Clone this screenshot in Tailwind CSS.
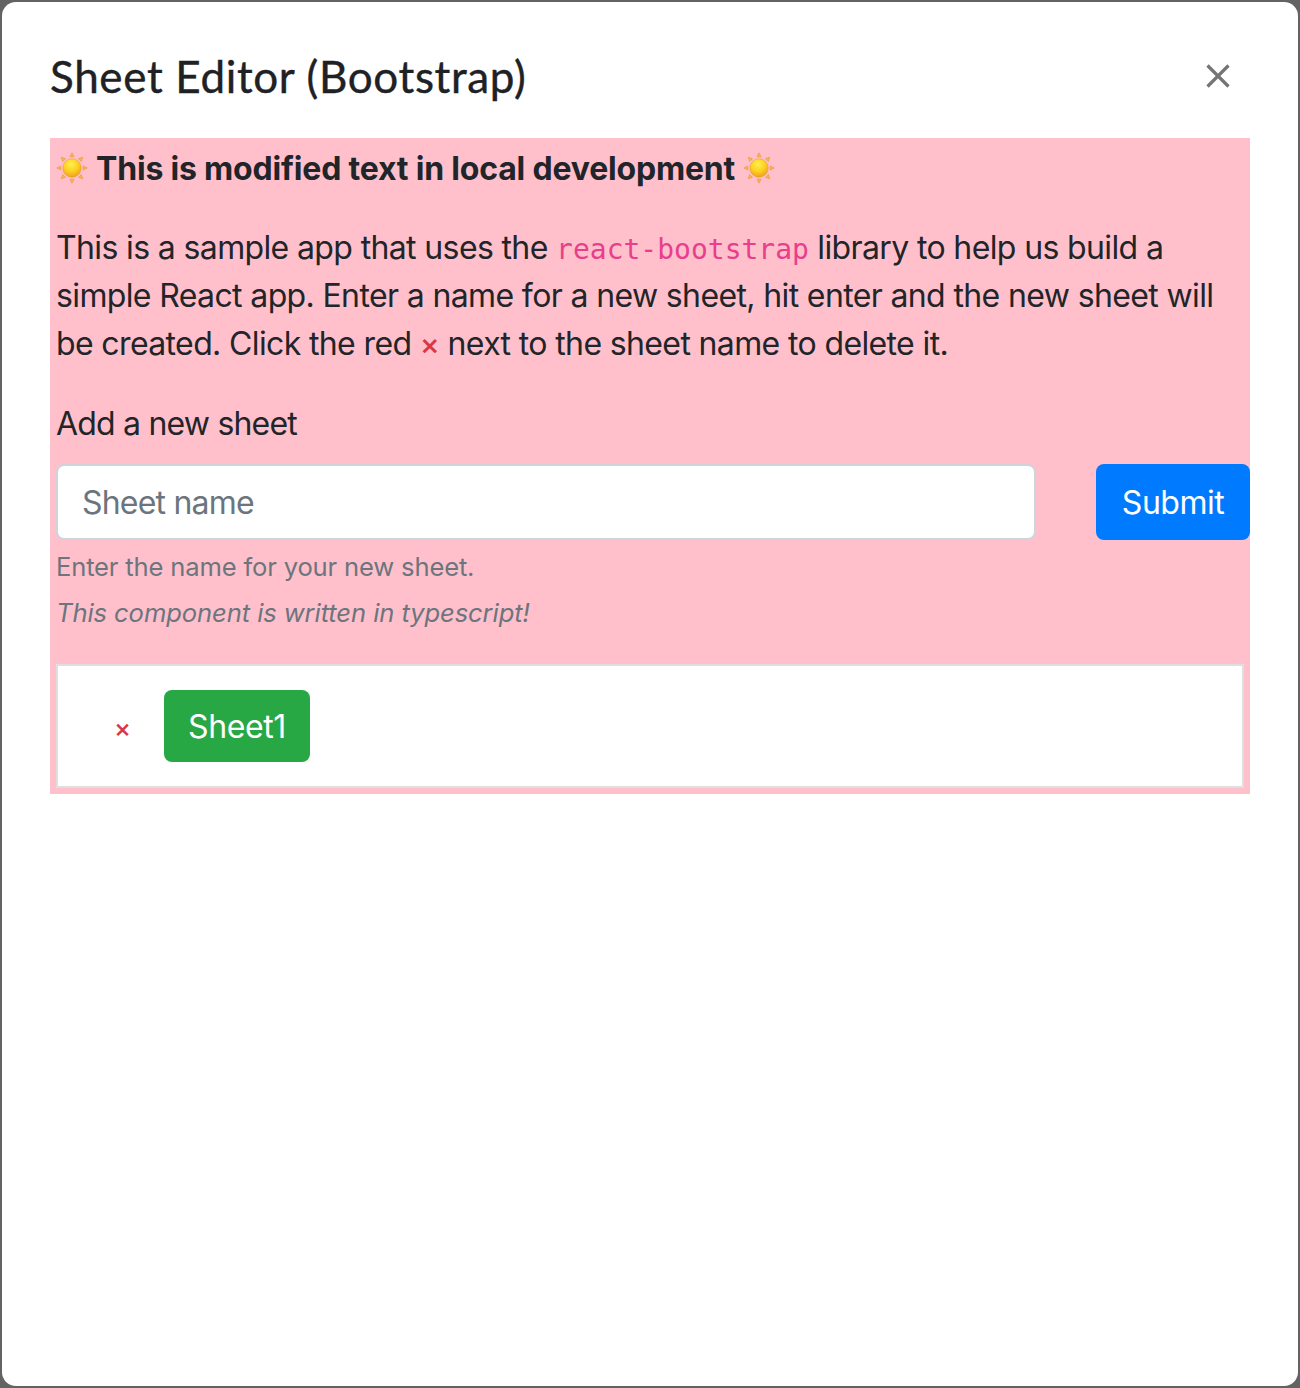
<!DOCTYPE html>
<html lang="en">
<head>
<meta charset="utf-8">
<title>Sheet Editor (Bootstrap)</title>
<script src="https://cdn.jsdelivr.net/npm/@tailwindcss/browser@4"></script>
</head>
<body class="bg-[#636363] font-['Inter',sans-serif] text-[32px] leading-[48px] text-[#212529]">
<svg class="absolute size-0">
  <defs>
    <radialGradient id="disc" cx="45%" cy="30%" r="70%">
      <stop offset="0" stop-color="#fff04a"/><stop offset=".55" stop-color="#fdd023"/><stop offset="1" stop-color="#f0a01c"/>
    </radialGradient>
    <symbol id="sun" viewBox="-16 -16 32 32">
      <g fill="#fbb92f" stroke="#e59a58" stroke-width=".7">
        <path id="ray" d="M-2-11.2 0-15.2 2-11.2Z"/>
        <use href="#ray" transform="rotate(45)"/><use href="#ray" transform="rotate(90)"/><use href="#ray" transform="rotate(135)"/>
        <use href="#ray" transform="rotate(180)"/><use href="#ray" transform="rotate(225)"/><use href="#ray" transform="rotate(270)"/><use href="#ray" transform="rotate(315)"/>
      </g>
      <circle r="9.2" fill="url(#disc)" stroke="#e8a030" stroke-width=".6"/>
    </symbol>
  </defs>
</svg>
<div class="h-[1388px] w-[1300px] p-[2px]">
  <main class="h-full rounded-[14px] bg-white px-12 pt-[46px]">
    <header class="flex h-[90px] items-start justify-between pr-5">
      <h1 class="font-['Lato',sans-serif] text-[44px] leading-[56px] tracking-[0.65px] whitespace-nowrap text-[#202124] [-webkit-text-stroke:0.4px]">Sheet Editor (Bootstrap)</h1>
      <button class="mt-4 block" aria-label="Close">
        <svg class="size-6" viewBox="0 0 24 24" fill="none" stroke="#757575" stroke-width="3.2"><path d="M1.5 1.5l21 21M22.5 1.5l-21 21"/></svg>
      </button>
    </header>
    <section class="h-[656px] bg-[#ffc0cb] pt-[6px] pl-[6px]">
      <p class="mb-8 flex items-center gap-2 font-bold tracking-[-0.19px] whitespace-nowrap"><svg class="size-8"><use href="#sun"/></svg><span class="relative top-px">This is modified text in local development</span><svg class="size-8"><use href="#sun"/></svg></p>
      <p class="mb-8 tracking-[-0.63px] whitespace-nowrap">
        <span class="block h-12">This is a sample app that uses the <code class="font-['DejaVu_Sans_Mono',monospace] text-[28px] leading-none tracking-normal text-[#e83e8c]">react-bootstrap</code> library to help us build a</span>
        <span class="block h-12">simple React app. Enter a name for a new sheet, hit enter and the new sheet will</span>
        <span class="block h-12">be created. Click the red <span class="text-[30px] leading-none font-medium text-[#dc3545]">×</span> next to the sheet name to delete it.</span>
      </p>
      <form>
        <label class="mb-4 block tracking-[-0.8px]">Add a new sheet</label>
        <div class="flex justify-between">
          <input class="h-[76px] w-[980px] rounded-lg border-2 border-[#ced4da] bg-white px-6 tracking-[-0.8px] placeholder:text-[#6c757d]" placeholder="Sheet name">
          <button type="button" class="h-[76px] w-[154px] rounded-lg bg-[#007bff] pt-px tracking-[-0.5px] text-white">Submit</button>
        </div>
        <small class="mt-2 block text-[25.6px] leading-[38px] tracking-[-0.17px] text-[#6c757d]">Enter the name for your new sheet.</small>
        <small class="mt-2 mb-8 block text-[25.6px] leading-[38px] tracking-[-0.1px] text-[#6c757d] italic">This component is written in typescript!</small>
      </form>
      <div class="mr-[6px] flex h-[124px] items-center border-2 border-[#dfdfdf] bg-white pl-[56px]">
        <span class="w-[50px] pt-1 text-[25.6px] font-medium text-[#dc3545]">×</span>
        <span class="flex h-[72px] w-[146px] items-center justify-center rounded-lg bg-[#28a745] pt-px tracking-[-0.4px] text-white">Sheet1</span>
      </div>
    </section>
  </main>
</div>
</body>
</html>
